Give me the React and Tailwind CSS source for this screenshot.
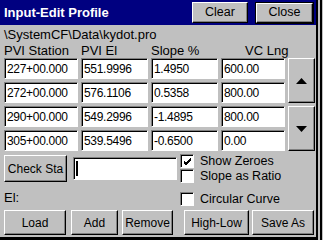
import React from "react";

const raised =
  "bg-[#c0c0c0] border border-t-white border-l-white border-r-black border-b-black shadow-[inset_-1px_-1px_0_#808080]";
const sunken =
  "bg-white border border-t-[#808080] border-l-[#808080] border-r-white border-b-white shadow-[inset_1px_1px_0_#000]";

function Cell({ value }) {
  return (
    <div className={`${sunken} h-[21px] flex items-center pl-[2px] text-[12px] tracking-[-0.3px] text-black leading-none`}>
      {value}
    </div>
  );
}

function Check({ checked, label }) {
  return (
    <div className="flex items-center gap-[6px] h-[14px]">
      <div className={`${sunken} w-[14px] h-[14px] flex items-center justify-center`}>
        {checked && (
          <svg width="9" height="9" viewBox="0 0 9 9">
            <path d="M1 4 L3 6 L8 1 M1 5 L3 7 L8 2 M1 6 L3 8 L8 3" stroke="#000" strokeWidth="1" fill="none" />
          </svg>
        )}
      </div>
      <span className="text-[12.5px] leading-none">{label}</span>
    </div>
  );
}

function Btn({ children, w, className = "" }) {
  return (
    <div className={`${raised} ${w} h-[25px] flex items-center justify-center text-[12px] leading-none ${className}`}>
      {children}
    </div>
  );
}

export default function App() {
  const rows = [
    ["227+00.000", "551.9996", "1.4950", "600.00"],
    ["272+00.000", "576.1106", "0.5358", "800.00"],
    ["290+00.000", "549.2996", "-1.4895", "800.00"],
    ["305+00.000", "539.5496", "-0.6500", "0.00"],
  ];

  return (
    <div
      className="w-[323px] h-[240px] bg-[#c0c0c0] flex overflow-hidden text-black"
      style={{ fontFamily: '"Liberation Sans", Arial, sans-serif' }}
    >
      <div className="w-[316px] h-[237px] flex flex-col border-b-[3px] border-black box-content">
        {/* title bar */}
        <div className="h-[25px] bg-[#000080] flex items-center pl-[4px] pr-[2px]">
          <span className="text-white font-bold text-[13px] leading-none">Input-Edit Profile</span>
          <div className={`${raised} ml-auto w-[56px] h-[21px] flex items-center justify-center text-[12.5px] leading-none`}>
            Clear
          </div>
          <div className="ml-[7px] w-[59px] h-[22px] border border-black flex">
            <div className={`${raised} flex-1 flex items-center justify-center text-[12.5px] leading-none`}>
              Close
            </div>
          </div>
        </div>

        <div className="pl-[4px] h-[16px] flex items-end text-[13px] leading-none">\SystemCF\Data\kydot.pro</div>

        <div className="flex h-[16px] items-end text-[13px] leading-none">
          <span className="pl-[4px] w-[81px]">PVI Station</span>
          <span className="w-[70px]">PVI El</span>
          <span className="w-[94px]">Slope %</span>
          <span>VC Lng</span>
        </div>

        <div className="mt-[1px] flex pl-[4px] gap-[3px]">
          <div className="grid grid-cols-[74px_67px_67px_64px] gap-[3px]">
            {rows.map((r, i) =>
              r.map((v, j) => <Cell key={`${i}-${j}`} value={v} />)
            )}
          </div>
          <div className="flex flex-col gap-[3px]">
            <div className={`${raised} w-[27px] h-[45px] flex items-center justify-center`}>
              <svg width="11" height="6" viewBox="0 0 11 6"><path d="M5.5 0 L11 6 L0 6 Z" fill="#000" /></svg>
            </div>
            <div className={`${raised} w-[27px] h-[45px] flex items-center justify-center`}>
              <svg width="11" height="6" viewBox="0 0 11 6"><path d="M0 0 L11 0 L5.5 6 Z" fill="#000" /></svg>
            </div>
          </div>
        </div>

        <div className="flex mt-[3px] pl-[4px]">
          <div className="flex flex-col">
            <div className="flex items-start gap-[6px]">
              <Btn w="w-[63px]" className="h-[27px] mt-[1px]">Check Sta</Btn>
              <div className={`${sunken} w-[104px] h-[23px] mt-[3px] flex items-center pl-[2px]`}>
                <div className="w-[2px] h-[15px] bg-black" />
              </div>
            </div>
            <div className="mt-[9px] text-[13px] leading-none">El:</div>
          </div>
          <div className="ml-[3px] flex flex-col gap-[1px]">
            <Check checked label="Show Zeroes" />
            <Check label="Slope as Ratio" />
            <div className="mt-[8px]">
              <Check label="Circular Curve" />
            </div>
          </div>
        </div>

        <div className="mt-auto mb-[2px] flex pl-[4px]">
          <Btn w="w-[62px]">Load</Btn>
          <Btn w="w-[47px]" className="ml-[5px]">Add</Btn>
          <Btn w="w-[51px]" className="ml-[4px]">Remove</Btn>
          <Btn w="w-[65px]" className="ml-[11px]">High-Low</Btn>
          <Btn w="w-[62px]" className="ml-[3px]">Save As</Btn>
        </div>
      </div>
      <div className="w-[2px] h-full bg-black" />
      <div className="w-[2px] h-full bg-[#c0c0c0]" />
      <div className="w-[2px] h-full bg-black" />
    </div>
  );
}
